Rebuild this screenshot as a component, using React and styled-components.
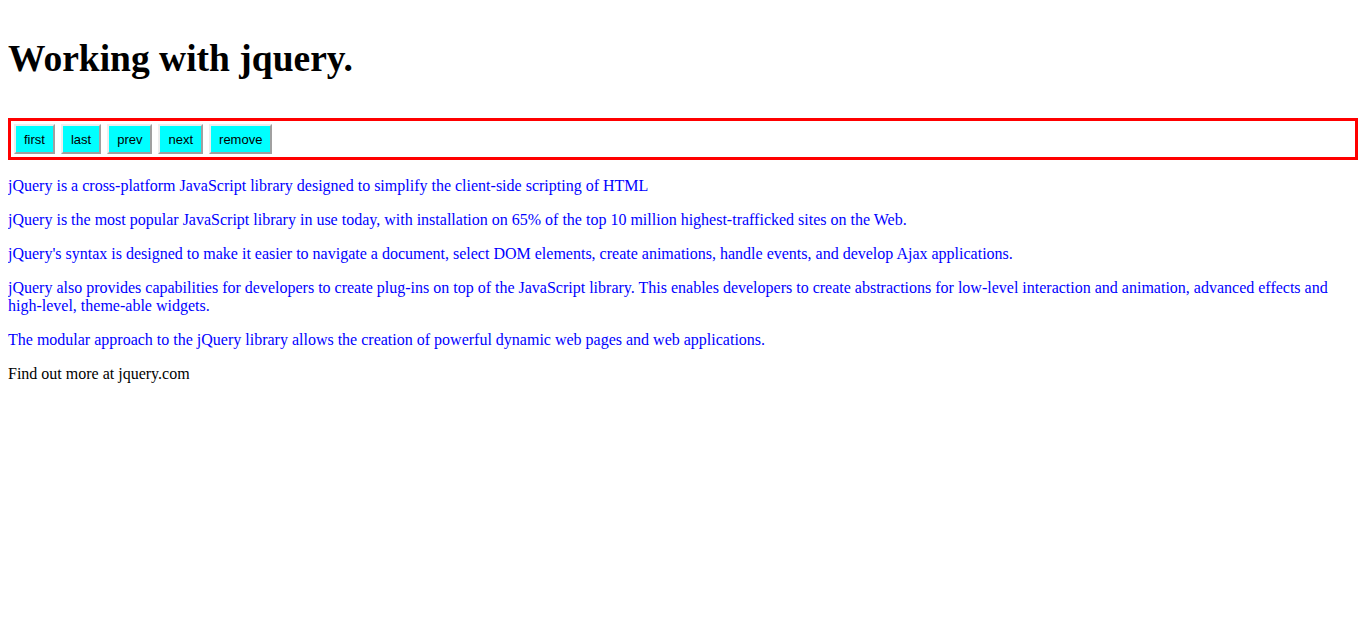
import React from "react";
import styled, { createGlobalStyle } from "styled-components";

const Global = createGlobalStyle`
  body {
    margin: 8px;
    font-family: "Liberation Serif", "Times New Roman", serif;
    font-size: 16px;
    background: #fff;
    color: #000;
  }
`;

const Title = styled.h1`
  font-family: "Liberation Serif", "Times New Roman", serif;
  font-weight: bold;
  font-size: 37.5px;
  margin: 29px 0 38px;
`;

const Toolbar = styled.div`
  display: flex;
  gap: 6px;
  padding: 3px 3px 3px;
  margin-bottom: 17px;
  border: 3px solid red;
`;

const Button = styled.button`
  font-family: "Liberation Sans", Arial, sans-serif;
  font-size: 13px;
  line-height: 18px;
  padding: 5px 8px 3px;
  margin: 0;
  background: #00ffff;
  color: #000;
  border: 2px solid;
  border-color: #eeeeee #a0a0a0 #a0a0a0 #eeeeee;
  cursor: pointer;
`;

const Para = styled.p`
  margin: 16px 0;
  line-height: 18px;
  color: ${(p) => (p.$plain ? "#000" : "#0000ff")};
`;

const texts = [
  "jQuery is a cross-platform JavaScript library designed to simplify the client-side scripting of HTML",
  "jQuery is the most popular JavaScript library in use today, with installation on 65% of the top 10 million highest-trafficked sites on the Web.",
  "jQuery's syntax is designed to make it easier to navigate a document, select DOM elements, create animations, handle events, and develop Ajax applications.",
  "jQuery also provides capabilities for developers to create plug-ins on top of the JavaScript library. This enables developers to create abstractions for low-level interaction and animation, advanced effects and high-level, theme-able widgets.",
  "The modular approach to the jQuery library allows the creation of powerful dynamic web pages and web applications.",
];

export default function App() {
  return (
    <>
      <Global />
      <Title>Working with jquery.</Title>
      <Toolbar>
        {["first", "last", "prev", "next", "remove"].map((b) => (
          <Button key={b}>{b}</Button>
        ))}
      </Toolbar>
      {texts.map((t, i) => (
        <Para key={i}>{t}</Para>
      ))}
      <Para $plain>Find out more at jquery.com</Para>
    </>
  );
}
